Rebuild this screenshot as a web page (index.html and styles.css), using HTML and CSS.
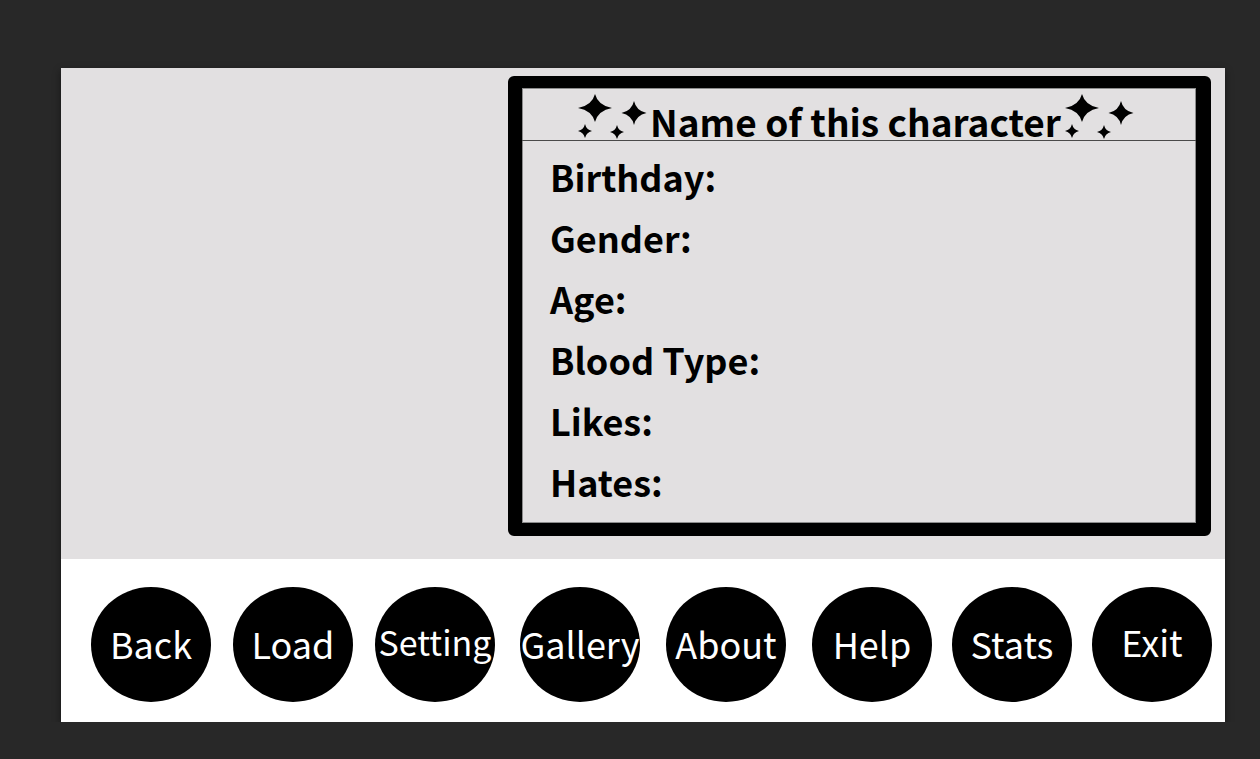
FILE: index.html
```html
<!DOCTYPE html>
<html lang="en">
<head>
    <meta charset="UTF-8">
    <meta name="viewport" content="width=device-width, initial-scale=1.0">
    <title>Character Profile</title>
    <link rel="stylesheet" href="styles.css">
</head>
<body>
    <div class="screen">
        <div class="stage">
            <div class="profile">
                <div class="profile-title">
                    <svg class="sparkles" width="72" height="46" viewBox="0 0 72 46">
                        <path d="M19 0Q22 11.5 36 14Q22 16.5 19 28Q16 16.5 2 14Q16 11.5 19 0Z"/>
                        <path d="M58 7Q60.2 16.8 70.5 19Q60.2 21.2 58 31Q55.8 21.2 45.5 19Q55.8 16.8 58 7Z"/>
                        <path d="M9 30Q10.3 35.7 16 37Q10.3 38.3 9 44Q7.7 38.3 2 37Q7.7 35.7 9 30Z"/>
                        <path d="M41 31Q42.3 36.7 48 38Q42.3 39.3 41 45Q39.7 39.3 34 38Q39.7 36.7 41 31Z"/>
                    </svg><span>Name of this character</span><svg class="sparkles" width="72" height="46" viewBox="0 0 72 46">
                        <path d="M19 0Q22 11.5 36 14Q22 16.5 19 28Q16 16.5 2 14Q16 11.5 19 0Z"/>
                        <path d="M58 7Q60.2 16.8 70.5 19Q60.2 21.2 58 31Q55.8 21.2 45.5 19Q55.8 16.8 58 7Z"/>
                        <path d="M9 30Q10.3 35.7 16 37Q10.3 38.3 9 44Q7.7 38.3 2 37Q7.7 35.7 9 30Z"/>
                        <path d="M41 31Q42.3 36.7 48 38Q42.3 39.3 41 45Q39.7 39.3 34 38Q39.7 36.7 41 31Z"/>
                    </svg>
                </div>
                <ul class="profile-fields">
                    <li>Birthday:</li>
                    <li>Gender:</li>
                    <li>Age:</li>
                    <li>Blood Type:</li>
                    <li>Likes:</li>
                    <li>Hates:</li>
                </ul>
            </div>
        </div>

        <nav class="menu">
            <a class="menu-btn" href="#">Back</a>
            <a class="menu-btn" href="#">Load</a>
            <a class="menu-btn menu-btn-small" href="#">Setting</a>
            <a class="menu-btn" href="#">Gallery</a>
            <a class="menu-btn" href="#">About</a>
            <a class="menu-btn" href="#">Help</a>
            <a class="menu-btn" href="#">Stats</a>
            <a class="menu-btn menu-btn-up" href="#">Exit</a>
        </nav>
    </div>
</body>
</html>
```

FILE: styles.css
```css
body {
    margin: 0;
    padding: 68px 0 0 61px;
    background: #282828;
    font-family: "Noto Sans CJK JP", "Noto Sans", sans-serif;
    color: #000;
}

.screen {
    width: 1164px;
    height: 654px;
    display: flex;
    flex-direction: column;
    background: #fff;
    box-shadow: 0 3px 8px rgba(0, 0, 0, 0.45);
}

.stage {
    height: 491px;
    box-sizing: border-box;
    background: #e2e0e1;
    display: flex;
    justify-content: flex-end;
    align-items: flex-start;
    padding: 8px 14px 0 0;
}

.profile {
    width: 703px;
    height: 460px;
    box-sizing: border-box;
    border-style: solid;
    border-color: #000;
    border-width: 12px 15px 13px 14px;
    border-radius: 6px;
    box-shadow: inset 0 0 0 1px #8c8c8c;
}

.profile-title {
    height: 53px;
    box-sizing: border-box;
    padding: 6px 7px 0 0;
    border-bottom: 1px solid #4a4a4a;
    text-align: center;
    font-size: 37px;
    font-weight: bold;
    line-height: 40px;
    white-space: nowrap;
}

.profile-title span {
    margin: 0 2px;
}

.sparkles {
    vertical-align: -3px;
    fill: #000;
}

.profile-fields {
    list-style: none;
    margin: 5px 0 0;
    padding: 0 0 0 28px;
}

.profile-fields li {
    font-size: 36px;
    font-weight: bold;
    line-height: 61px;
}

.menu {
    flex: 1;
    display: flex;
    gap: 22px;
    padding: 28px 0 0 30px;
}

.menu-btn {
    width: 120px;
    height: 115px;
    flex: none;
    box-sizing: border-box;
    padding-bottom: 4px;
    border-radius: 50%;
    background: #000;
    color: #fff;
    text-decoration: none;
    display: flex;
    align-items: center;
    justify-content: center;
    font-size: 36px;
    white-space: nowrap;
}

.menu-btn:nth-child(4) {
    margin-left: 3px;
}

.menu-btn:nth-child(5),
.menu-btn:nth-child(6) {
    margin-left: 4px;
}

.menu-btn:nth-child(7),
.menu-btn:nth-child(8) {
    margin-left: -2px;
}

.menu-btn-small {
    font-size: 34px;
    padding-bottom: 7px;
}

.menu-btn-up {
    padding-bottom: 7px;
}
```
